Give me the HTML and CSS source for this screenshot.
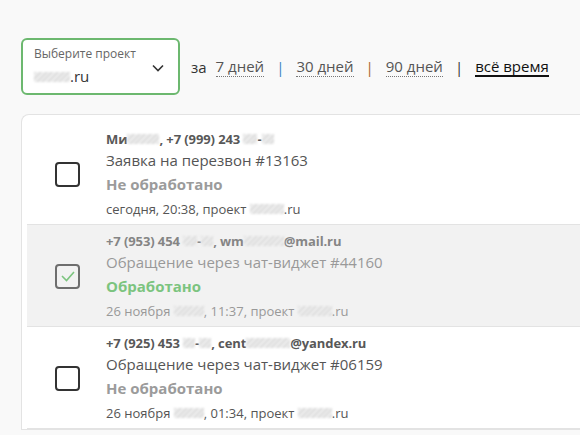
FILE: index.html
```html
<!DOCTYPE html>
<html lang="ru">
<head>
<meta charset="utf-8">
<link rel="stylesheet" href="styles.css">
</head>
<body>
<div class="page">
  <div class="toolbar">
    <div class="select">
      <div class="select-text">
        <div class="select-label">Выберите проект</div>
        <div class="select-value"><span class="blur w36"></span>.ru</div>
      </div>
      <svg class="chevron" width="12" height="8" viewBox="0 0 12 8"><polyline points="1,1.5 6,6.5 11,1.5" fill="none" stroke="#333" stroke-width="1.6"/></svg>
    </div>
    <div class="periods">
      <span class="za">за</span>
      <a class="period">7 дней</a><span class="sep sep-blue">|</span>
      <a class="period">30 дней</a><span class="sep sep-brown">|</span>
      <a class="period">90 дней</a><span class="sep">|</span>
      <a class="period active">всё время</a>
    </div>
  </div>
  <div class="card">
    <div class="row">
      <div class="check-col"><span class="checkbox"></span></div>
      <div class="info">
        <div class="head">Ми<span class="blur w32"></span>, +7 (999) 243 <span class="blur w14"></span>-<span class="blur w12"></span></div>
        <div class="title">Заявка на перезвон #13163</div>
        <div class="status">Не обработано</div>
        <div class="date">сегодня, 20:38, проект <span class="blur w34"></span>.ru</div>
      </div>
    </div>
    <div class="row done">
      <div class="check-col"><span class="checkbox"><svg width="16" height="16" viewBox="0 0 16 16"><polyline points="2,8 6.5,12.5 14,4" fill="none" stroke="#7cc47f" stroke-width="1.6"/></svg></span></div>
      <div class="info">
        <div class="head">+7 (953) 454 <span class="blur w14"></span>-<span class="blur w12"></span>, wm<span class="blur w40"></span>@mail.ru</div>
        <div class="title">Обращение через чат-виджет #44160</div>
        <div class="status">Обработано</div>
        <div class="date">26 ноября <span class="blur w30"></span>, 11:37, проект <span class="blur w34"></span>.ru</div>
      </div>
    </div>
    <div class="row">
      <div class="check-col"><span class="checkbox"></span></div>
      <div class="info">
        <div class="head">+7 (925) 453 <span class="blur w12"></span>-<span class="blur w12"></span>, cent<span class="blur w44"></span>@yandex.ru</div>
        <div class="title">Обращение через чат-виджет #06159</div>
        <div class="status">Не обработано</div>
        <div class="date">26 ноября <span class="blur w30"></span>, 01:34, проект <span class="blur w34"></span>.ru</div>
      </div>
    </div>
  </div>
</div>
</body>
</html>
```
FILE: styles.css
```css
html, body {
  margin: 0;
  padding: 0;
  background: #f9f9f9;
  font-family: "Open Sans", "Liberation Sans", sans-serif;
  color: #333;
  overflow: hidden;
}
.page {
  padding: 38px 0 0 21px;
  width: 620px;
}
.toolbar {
  display: flex;
  align-items: center;
}
.select {
  box-sizing: border-box;
  width: 159px;
  height: 57px;
  border: 2px solid #6cb86f;
  border-radius: 6px;
  background: #fff;
  display: flex;
  align-items: center;
  justify-content: space-between;
  padding: 0 14px 0 11px;
}
.select-label {
  font-size: 12px;
  line-height: 16px;
  color: #666;
}
.select-value {
  font-size: 15px;
  line-height: 22px;
  color: #333;
  margin-top: 3px;
}
.chevron {
  margin-top: 3px;
}
.periods {
  display: flex;
  align-items: center;
  font-size: 15px;
  line-height: 22px;
  margin-left: 11px;
}
.za {
  color: #333;
  margin-right: 9px;
}
.period {
  color: #555;
  border-bottom: 1px dotted #777;
  line-height: 19px;
}
.period.active {
  color: #111;
  border-bottom: 2px solid #111;
  line-height: 18px;
}
.sep {
  color: #333;
  margin: 0 12px;
}
.sep-blue { color: #3b82c4; }
.sep-brown { color: #a8652a; }
.card {
  margin-top: 19px;
  background: #fff;
  border: 1px solid #e3e3e3;
  border-right: none;
  border-radius: 8px 0 0 0;
  padding: 8px 0 0 5px;
}
.row {
  display: flex;
  align-items: center;
  height: 101px;
  border-bottom: 1px solid #e3e3e3;
}
.row.done {
  background: #f2f2f2;
}
.check-col {
  width: 79px;
  display: flex;
  padding-left: 28px;
  box-sizing: border-box;
  margin-top: 2px;
}
.checkbox {
  box-sizing: border-box;
  width: 25px;
  height: 25px;
  border: 2px solid #333;
  border-radius: 4px;
  display: flex;
  align-items: center;
  justify-content: center;
}
.done .checkbox {
  border-color: #6e6e6e;
  margin-top: -1px;
}
.info {
  align-self: flex-start;
  padding-top: 7px;
}
.head {
  font-size: 13px;
  line-height: 18px;
  font-weight: 700;
  color: #585858;
  letter-spacing: -0.1px;
}
.title {
  font-size: 15px;
  line-height: 24px;
  color: #555;
}
.status {
  font-size: 15px;
  line-height: 24px;
  font-weight: 700;
  color: #9b9b9b;
}
.date {
  font-size: 13px;
  line-height: 18px;
  margin-top: 4px;
  color: #555;
}
.done .head { color: #858585; }
.done .title { color: #999; }
.done .status { color: #7cc47f; }
.done .date { color: #999; }
.blur {
  display: inline-block;
  height: 10px;
  vertical-align: 0;
  background: repeating-linear-gradient(135deg, #dcdcdc 0 2px, #f0f0f0 2px 4px);
  filter: blur(0.8px);
}
.w10 { width: 10px; }
.w12 { width: 12px; }
.w14 { width: 14px; }
.w30 { width: 30px; }
.w32 { width: 32px; }
.w34 { width: 34px; }
.w36 { width: 36px; }
.w40 { width: 40px; }
.w44 { width: 44px; }
```
